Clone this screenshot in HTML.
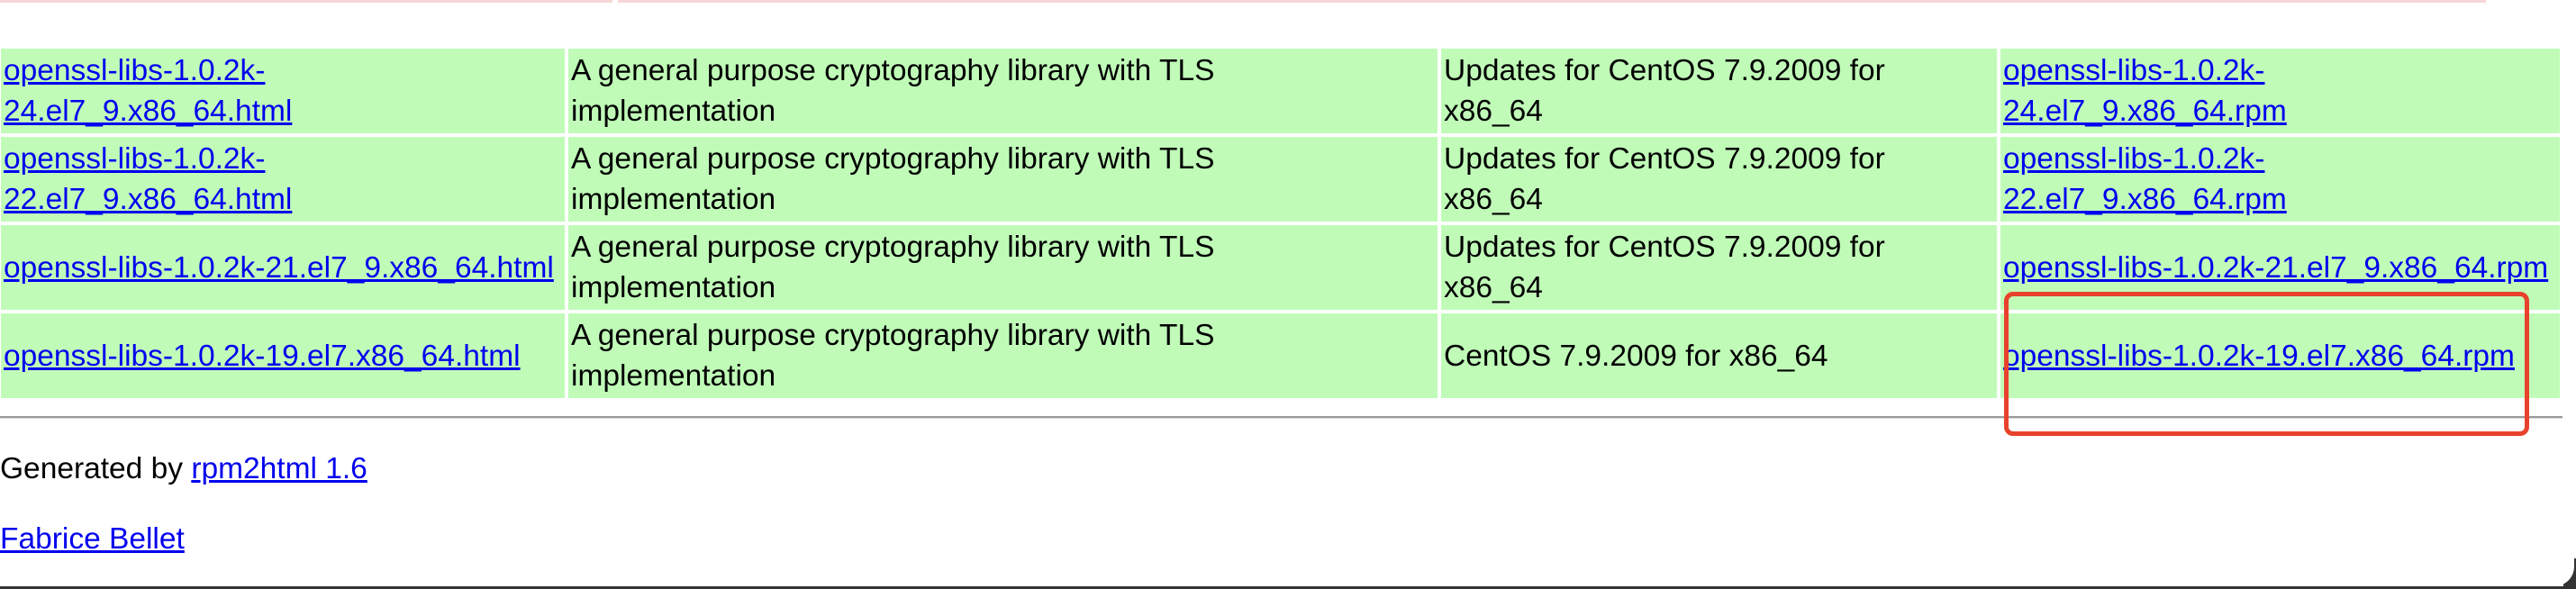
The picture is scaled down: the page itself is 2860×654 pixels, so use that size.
<!DOCTYPE html>
<html><head><meta charset="utf-8"><style>
html,body{margin:0;padding:0;background:#fff;width:2860px;height:654px;overflow:hidden;position:relative;font-family:"Liberation Sans",Arial,sans-serif;font-size:33.5px;color:#000}
.c{position:absolute;background:#c0fcb8;display:flex;align-items:center;box-sizing:border-box;padding:0 3px;line-height:45px;white-space:nowrap}
a{color:#0000ee;text-decoration:underline}
.r1{top:54px;height:94px}.r2{top:152px;height:94px}.r3{top:250px;height:94px}.r4{top:348px;height:94px}
.k1{left:1px;width:626px}.k2{left:631px;width:965px}.k3{left:1600px;width:617px}.k4{left:2221px;width:621px}
</style></head><body>
<div style="position:absolute;left:0;top:0;width:2760px;height:3px;background:#f6d6d6"></div>
<div style="position:absolute;left:680px;top:0;width:6px;height:3px;background:#fff"></div>

<div class="c r1 k1"><div><a>openssl-libs-1.0.2k-<br>24.el7_9.x86_64.html</a></div></div>
<div class="c r1 k2"><div>A general purpose cryptography library with TLS<br>implementation</div></div>
<div class="c r1 k3"><div>Updates for CentOS 7.9.2009 for<br>x86_64</div></div>
<div class="c r1 k4"><div><a>openssl-libs-1.0.2k-<br>24.el7_9.x86_64.rpm</a></div></div>

<div class="c r2 k1"><div><a>openssl-libs-1.0.2k-<br>22.el7_9.x86_64.html</a></div></div>
<div class="c r2 k2"><div>A general purpose cryptography library with TLS<br>implementation</div></div>
<div class="c r2 k3"><div>Updates for CentOS 7.9.2009 for<br>x86_64</div></div>
<div class="c r2 k4"><div><a>openssl-libs-1.0.2k-<br>22.el7_9.x86_64.rpm</a></div></div>

<div class="c r3 k1"><div><a>openssl-libs-1.0.2k-21.el7_9.x86_64.html</a></div></div>
<div class="c r3 k2"><div>A general purpose cryptography library with TLS<br>implementation</div></div>
<div class="c r3 k3"><div>Updates for CentOS 7.9.2009 for<br>x86_64</div></div>
<div class="c r3 k4"><div><a>openssl-libs-1.0.2k-21.el7_9.x86_64.rpm</a></div></div>

<div class="c r4 k1"><div><a>openssl-libs-1.0.2k-19.el7.x86_64.html</a></div></div>
<div class="c r4 k2"><div>A general purpose cryptography library with TLS<br>implementation</div></div>
<div class="c r4 k3"><div>CentOS 7.9.2009 for x86_64</div></div>
<div class="c r4 k4"><div><a>openssl-libs-1.0.2k-19.el7.x86_64.rpm</a></div></div>

<div style="position:absolute;left:0;top:462px;width:2845px;height:2px;background:#999"></div>
<div style="position:absolute;left:0;top:464px;width:2845px;height:1px;background:#ddd"></div>

<div style="position:absolute;left:2225px;top:324px;width:583px;height:160px;box-sizing:border-box;border:5px solid #e8412c;border-radius:10px"></div>

<div style="position:absolute;left:0;top:498px;line-height:45px">Generated by <a>rpm2html 1.6</a></div>
<div style="position:absolute;left:0;top:576px;line-height:45px"><a>Fabrice Bellet</a></div>

<div style="position:absolute;left:0;top:651px;width:2860px;height:3px;background:#333"></div>
<div style="position:absolute;right:0;top:620px;width:14px;height:34px;background:#333"></div>
<div style="position:absolute;right:2px;top:610px;width:30px;height:41px;background:#fff;border-bottom-right-radius:22px"></div>
</body></html>
